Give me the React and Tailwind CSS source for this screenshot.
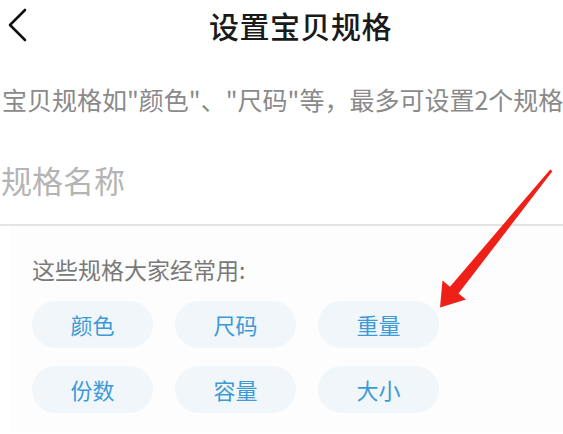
import React from "react";

const chips = ["颜色", "尺码", "重量", "份数", "容量", "大小"];

export default function App() {
  return (
    <div
      className="relative w-[563px] h-[434px] overflow-hidden bg-white"
      style={{ fontFamily: '"Noto Sans CJK SC", "Noto Sans", sans-serif' }}
    >
      {/* header */}
      <div className="flex h-[50px] items-center">
        <svg className="ml-[6px] w-[22px] h-[34px]" viewBox="0 0 22 34" fill="none">
          <path d="M19 2 L4 17 L19 32" stroke="#111" strokeWidth="2.6" strokeLinecap="round" strokeLinejoin="round" />
        </svg>
        <div className="ml-[181px] text-[30px] leading-[40px] font-medium text-[#1a1a1a] tracking-[0.5px]">
          设置宝贝规格
        </div>
      </div>

      {/* subtitle */}
      <div className="flex h-[98px] items-center pl-[2px] text-[25px] leading-[34px] text-[#8a8a8a] whitespace-nowrap">
        宝贝规格如"颜色"、"尺码"等，最多可设置2个规格
      </div>

      {/* input placeholder */}
      <div className="flex h-[78px] items-center pb-[12px] pl-[1px] text-[31px] leading-[40px] text-[#b4b4b4] border-b-2 border-[#e3e3e3]">
        规格名称
      </div>

      {/* common specs panel */}
      <div className="ml-[10px] h-[206px] bg-[#fdfdfd] pt-[28px] pl-[22px]">
        <div className="text-[23px] leading-[30px] text-[#7a7a7a]">这些规格大家经常用:</div>
        <div className="mt-[17px] grid grid-cols-[121px_121px_121px] gap-x-[22px] gap-y-[18px]">
          {chips.map((c) => (
            <div
              key={c}
              className="flex h-[47px] items-center justify-center rounded-full bg-[#f1f6fb] text-[22px] text-[#3d9ad6]"
            >
              {c}
            </div>
          ))}
        </div>
      </div>

      {/* red arrow overlay */}
      <svg className="absolute left-0 top-0 w-[563px] h-[434px] pointer-events-none" viewBox="0 0 563 434">
        <polygon
          points="550.2,169.4 552.4,171.2 458.5,293.5 466,299.5 440,307.5 442.5,280.5 450,286.8"
          fill="#ee2018"
        />
      </svg>
    </div>
  );
}
